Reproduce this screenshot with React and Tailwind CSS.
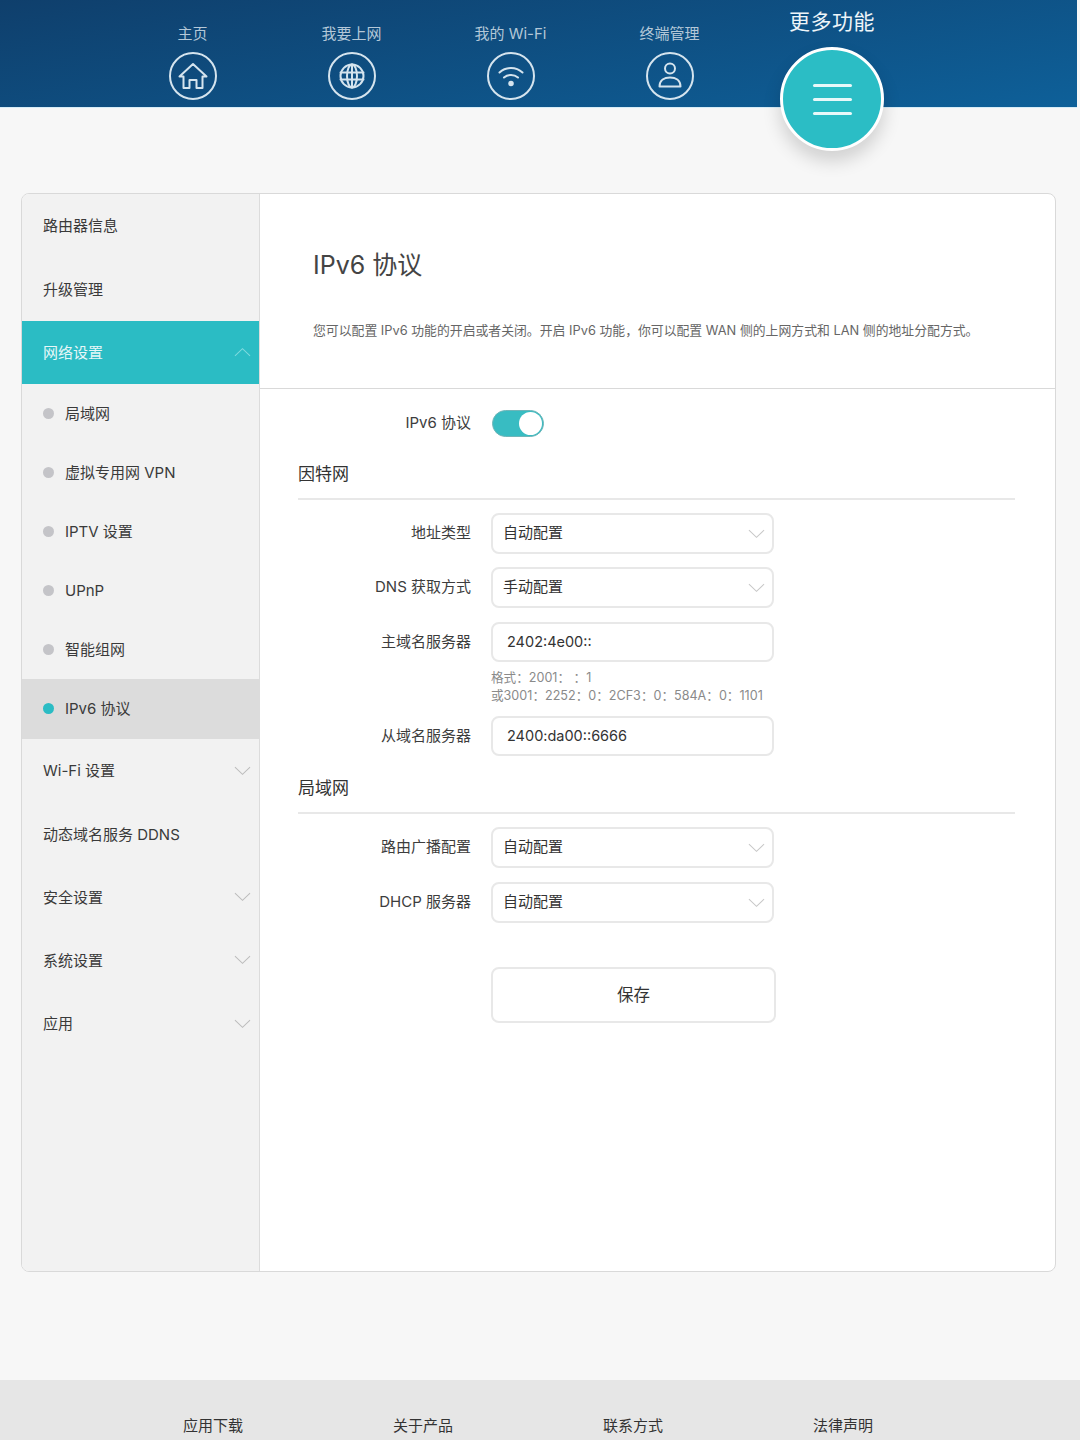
import React from "react";

function Chevron({ up, className }) {
  return (
    <svg viewBox="0 0 18 10" className={className} fill="none" stroke="currentColor" strokeWidth="1.1">
      <path d={up ? "M1 9L9 1.5L17 9" : "M1 1L9 8.5L17 1"} />
    </svg>
  );
}

function NavItem({ label, children }) {
  return (
    <div className="w-[159px] flex flex-col items-center">
      <div className="h-[25px] mt-[21px] text-[15px] leading-[25px] text-[#b4c8d8] whitespace-nowrap">{label}</div>
      <div className="mt-[6px] w-[48px] h-[48px]">
        <svg viewBox="0 0 48 48" className="w-full h-full" fill="none" stroke="#d5e4ee" strokeWidth="2" strokeLinejoin="round" strokeLinecap="round">
          <circle cx="24" cy="24" r="23" />
          {children}
        </svg>
      </div>
    </div>
  );
}

function SideRow({ label, chevron, active }) {
  return (
    <div className={`h-[63.3px] pl-[21px] pr-[8px] flex items-center justify-between text-[15px] ${active ? "bg-[#2bbcc4] text-[#e6f7f8]" : "text-[#3a3a3a]"}`}>
      <span className="pt-[2px]">{label}</span>
      {chevron && <Chevron up={active} className={`w-[17px] h-[10px] ${active ? "text-[#7fdade]" : "text-[#bdbdbd]"}`} />}
    </div>
  );
}

function SubRow({ label, active }) {
  return (
    <div className={`${active ? "h-[60px] bg-[#dcdcdc]" : "h-[59px]"} pl-[21px] flex items-center gap-[11px] text-[15px] text-[#3a3a3a]`}>
      <span className={`w-[11px] h-[11px] rounded-full ${active ? "bg-[#2bbcc4]" : "bg-[#c4c4c8]"}`} />
      <span className="pt-[1px]">{label}</span>
    </div>
  );
}

function Label({ children }) {
  return <div className="w-[173px] text-right text-[15px] text-[#3d3d3d] whitespace-nowrap shrink-0">{children}</div>;
}

function SelectRow({ label, value, className = "" }) {
  return (
    <div className={`flex items-center gap-[20px] ${className}`}>
      <Label>{label}</Label>
      <div className="w-[283px] h-[41px] border-2 border-[#e8e8e8] rounded-[8px] bg-white pl-[10px] pr-[7px] flex items-center justify-between text-[15px] text-[#333]">
        <span>{value}</span>
        <Chevron className="w-[17px] h-[10px] text-[#c8c8c8]" />
      </div>
    </div>
  );
}

function InputRow({ label, value, className = "" }) {
  return (
    <div className={`flex items-center gap-[20px] ${className}`}>
      <Label>{label}</Label>
      <div className="w-[283px] h-[40px] border-2 border-[#e8e8e8] rounded-[8px] bg-white pl-[14px] flex items-center text-[14.5px] text-[#333]">
        {value}
      </div>
    </div>
  );
}

function Section({ title, className = "" }) {
  return (
    <div className={`border-b-2 border-[#e8e8e8] h-[38px] text-[17px] leading-[24px] text-[#333] ${className}`}>{title}</div>
  );
}

export default function App() {
  return (
    <div className="relative w-[1080px] h-[1440px] overflow-hidden bg-[#f7f7f7] font-['Inter','Noto_Sans_CJK_SC',sans-serif]">
      <header className="w-[1077px] h-[108px] bg-[linear-gradient(170deg,#0f3f6c,#0e6099)] flex pl-[113px] border-b border-[#d6ecf7]">
        <NavItem label="主页">
          <path d="M24 12L37.5 24.5H33.5V36H27.5V28H20.5V36H14.5V24.5H10.5Z" />
        </NavItem>
        <NavItem label="我要上网">
          <circle cx="24" cy="24" r="11.5" />
          <ellipse cx="24" cy="24" rx="5" ry="11.5" />
          <path d="M24 12.5V35.5M12.5 20.5H35.5M12.5 27.5H35.5" />
        </NavItem>
        <NavItem label="我的 Wi-Fi">
          <path d="M12.5 20.5C19 14.5 29 14.5 35.5 20.5" />
          <path d="M17 25.5C21 22 27 22 31 25.5" />
          <circle cx="24" cy="31.5" r="1.8" fill="#d5e4ee" />
        </NavItem>
        <NavItem label="终端管理">
          <circle cx="24" cy="16.5" r="5" />
          <path d="M13.5 34.5C13.5 28 18.5 25.5 24 25.5C29.5 25.5 34.5 28 34.5 34.5Z" />
        </NavItem>
      </header>

      <div className="absolute left-[732px] top-[7px] w-[200px] text-center text-[21px] leading-[30px] tracking-[0.5px] text-[#eef5f9]">更多功能</div>
      <div className="absolute left-[780px] top-[47px] w-[104px] h-[104px] rounded-full bg-[#2bbdc5] border-[3px] border-white shadow-[0_10px_18px_rgba(0,0,0,0.16)] flex flex-col items-center justify-center gap-[11px]">
        <span className="block w-[39px] h-[3px] rounded-full bg-[#e8f8f9]" />
        <span className="block w-[39px] h-[3px] rounded-full bg-[#e8f8f9]" />
        <span className="block w-[39px] h-[3px] rounded-full bg-[#e8f8f9]" />
      </div>

      <main className="ml-[21px] mt-[85px] w-[1035px] h-[1079px] border border-[#d9d9d9] rounded-[8px] overflow-hidden bg-white flex">
        <aside className="w-[238px] shrink-0 bg-[#f2f2f2] border-r border-[#dcdcdc]">
          <SideRow label="路由器信息" />
          <SideRow label="升级管理" />
          <SideRow label="网络设置" chevron active />
          <SubRow label="局域网" />
          <SubRow label="虚拟专用网 VPN" />
          <SubRow label="IPTV 设置" />
          <SubRow label="UPnP" />
          <SubRow label="智能组网" />
          <SubRow label="IPv6 协议" active />
          <SideRow label="Wi-Fi 设置" chevron />
          <SideRow label="动态域名服务 DDNS" />
          <SideRow label="安全设置" chevron />
          <SideRow label="系统设置" chevron />
          <SideRow label="应用" chevron />
        </aside>

        <section className="flex-1 min-w-0">
          <div className="h-[195px] border-b border-[#d9d9d9] pl-[53px] pt-[52px]">
            <h1 className="text-[25px] leading-[38px] text-[#444]">IPv6 协议</h1>
            <p className="mt-[37px] text-[12.85px] leading-[20px] text-[#666] whitespace-nowrap">您可以配置 IPv6 功能的开启或者关闭。开启 IPv6 功能，你可以配置 WAN 侧的上网方式和 LAN 侧的地址分配方式。</p>
          </div>

          <div className="pl-[38px] pr-[40px]">
            <div className="flex items-center gap-[20px] h-[28px] mt-[20px]">
              <Label>IPv6 协议</Label>
              <div className="ml-[1px] w-[52px] h-[27px] rounded-full bg-[#38bcc2] border border-[#6fb5b8] flex items-center justify-end pr-[1px]">
                <span className="w-[23px] h-[23px] rounded-full bg-white" />
              </div>
            </div>
            <Section title="因特网" className="mt-[25px]" />
            <SelectRow label="地址类型" value="自动配置" className="mt-[13px]" />
            <SelectRow label="DNS 获取方式" value="手动配置" className="mt-[13px]" />
            <InputRow label="主域名服务器" value="2402:4e00::" className="mt-[14px]" />
            <div className="ml-[193px] mt-[7px] text-[12.6px] leading-[18px] text-[#8a8a8a] whitespace-nowrap">
              <div>格式：2001： ：1</div>
              <div>或3001：2252：0：2CF3：0：584A：0：1101</div>
            </div>
            <InputRow label="从域名服务器" value="2400:da00::6666" className="mt-[11px]" />
            <Section title="局域网" className="mt-[20px]" />
            <SelectRow label="路由广播配置" value="自动配置" className="mt-[13px]" />
            <SelectRow label="DHCP 服务器" value="自动配置" className="mt-[14px]" />
            <div className="ml-[193px] mt-[44px] w-[285px] h-[56px] border-2 border-[#e8e8e8] rounded-[8px] bg-white flex items-center justify-center text-[16.5px] text-[#333]">保存</div>
          </div>
        </section>
      </main>

      <footer className="mt-[108px] h-[60px] bg-[#e6e6e6] pl-[108px] flex text-[15px] text-[#333]">
        {["应用下载", "关于产品", "联系方式", "法律声明"].map((t) => (
          <div key={t} className="w-[210px] text-center pt-[36px] leading-[20px]">{t}</div>
        ))}
      </footer>
    </div>
  );
}
